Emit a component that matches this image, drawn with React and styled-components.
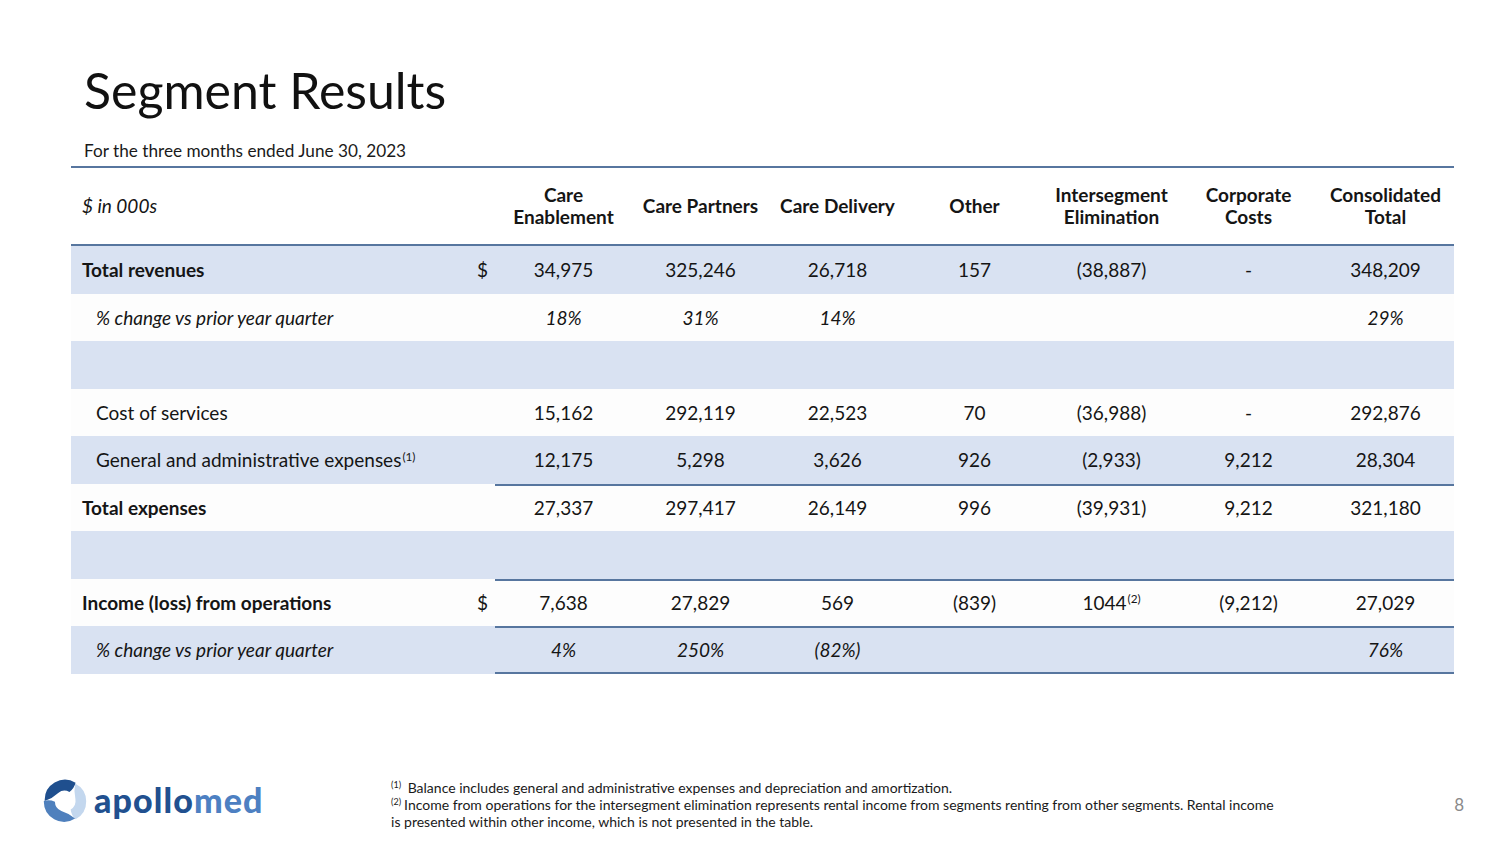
import React from "react";
import styled, { createGlobalStyle } from "styled-components";

const Global = createGlobalStyle`
  html, body { margin: 0; padding: 0; background: #fff; }
  body { font-family: Lato, "Open Sans", sans-serif; color: #151515; }
`;

const Page = styled.div`
  width: 1500px;
  height: 844px;
  box-sizing: border-box;
  display: flex;
  flex-direction: column;
  padding: 60px 36px 0 71px;
`;

const Title = styled.h1`
  margin: 0;
  padding-left: 13px;
  font-size: 50px;
  line-height: 60px;
  font-weight: 400;
  color: #111;
`;

const Subtitle = styled.div`
  padding-left: 13px;
  margin-top: 21px;
  font-size: 17.2px;
  line-height: 20px;
  color: #1a1a1a;
`;

const Table = styled.div`
  margin-top: 5px;
  width: 1383px;
  border-top: 2px solid #57769f;
`;

const cols = "424px repeat(7, 137px)";

const HeaderRow = styled.div`
  display: grid;
  grid-template-columns: ${cols};
  height: 76px;
  align-items: center;
  border-bottom: 2px solid #57769f;
  background: #fff;
`;

const HeadCell = styled.div`
  font-weight: 700;
  font-size: 19px;
  line-height: 22px;
  text-align: ${(p) => (p.$left ? "left" : "center")};
  padding-left: ${(p) => (p.$left ? "11px" : "0")};
  font-style: ${(p) => (p.$italic ? "italic" : "normal")};
  ${(p) => p.$italic && "font-weight: 400;"}
`;

const Row = styled.div`
  display: grid;
  grid-template-columns: ${cols};
  height: 47.5px;
  align-items: stretch;
  background: ${(p) => (p.$shade ? "#d9e2f2" : "#fdfdfd")};
  font-size: 19px;
`;

const LabelCell = styled.div`
  display: flex;
  align-items: center;
  justify-content: space-between;
  padding-left: ${(p) => (p.$indent ? "25px" : "11px")};
  padding-right: 7px;
  font-weight: ${(p) => (p.$bold ? 700 : 400)};
  font-style: ${(p) => (p.$italic ? "italic" : "normal")};
`;

const Dollar = styled.span`
  font-weight: 400;
  font-style: normal;
`;

const ValueCell = styled.div`
  display: flex;
  align-items: center;
  justify-content: center;
  font-style: ${(p) => (p.$italic ? "italic" : "normal")};
  box-shadow: ${(p) =>
    [p.$top && "inset 0 2px 0 #57769f", p.$bottom && "inset 0 -2px 0 #57769f"]
      .filter(Boolean)
      .join(", ") || "none"};
`;

const Sup = styled.sup`
  font-size: 0.62em;
  line-height: 0;
  vertical-align: 0.55em;
  margin-left: 1px;
`;

const Footer = styled.div`
  margin-top: auto;
  margin-left: -29px;
  height: 65px;
  display: flex;
  align-items: flex-start;
`;

const Logo = styled.div`
  display: flex;
  align-items: center;
  gap: 6px;
  width: 348px;
  height: 46px;
  margin-top: -1px;
`;

const LogoText = styled.span`
  font-family: Lato, "Open Sans", sans-serif;
  font-weight: 900;
  font-size: 34px;
  letter-spacing: 1.1px;
  color: #21508f;
  line-height: 1;
  margin-top: -3px;
`;

const LogoMed = styled.span`
  color: #4d80c2;
`;

const Notes = styled.div`
  font-size: 14px;
  line-height: 17px;
  color: #1a1a1a;
  white-space: nowrap;
  width: 1066px;
  margin-left: 2px;
`;

const NoteSup = styled.sup`
  font-size: 9px;
  line-height: 0;
  vertical-align: 0.6em;
  margin-right: 3px;
`;

const PageNum = styled.div`
  font-size: 17px;
  color: #8a8a8a;
  margin-top: 15px;
`;

const headers = [
  ["Care", "Enablement"],
  ["Care Partners"],
  ["Care Delivery"],
  ["Other"],
  ["Intersegment", "Elimination"],
  ["Corporate", "Costs"],
  ["Consolidated", "Total"],
];

const rows = [
  { label: "Total revenues", bold: true, dollar: true, shade: true,
    values: ["34,975", "325,246", "26,718", "157", "(38,887)", "-", "348,209"] },
  { label: "% change vs prior year quarter", italic: true, indent: true,
    values: ["18%", "31%", "14%", "", "", "", "29%"] },
  { label: "", shade: true, values: ["", "", "", "", "", "", ""] },
  { label: "Cost of services", indent: true,
    values: ["15,162", "292,119", "22,523", "70", "(36,988)", "-", "292,876"] },
  { label: "General and administrative expenses", sup: "(1)", indent: true, shade: true,
    values: ["12,175", "5,298", "3,626", "926", "(2,933)", "9,212", "28,304"] },
  { label: "Total expenses", bold: true, top: true,
    values: ["27,337", "297,417", "26,149", "996", "(39,931)", "9,212", "321,180"] },
  { label: "", shade: true, values: ["", "", "", "", "", "", ""] },
  { label: "Income (loss) from operations", bold: true, dollar: true, top: true,
    values: ["7,638", "27,829", "569", "(839)", "1044", "(9,212)", "27,029"], supAt: 4 },
  { label: "% change vs prior year quarter", italic: true, indent: true, shade: true, top: true, bottom: true,
    values: ["4%", "250%", "(82%)", "", "", "", "76%"] },
];

function LogoMark() {
  const p = (a, r) => {
    const t = (a * Math.PI) / 180;
    return `${(50 + r * Math.cos(t)).toFixed(2)} ${(50 + r * Math.sin(t)).toFixed(2)}`;
  };
  const blade = (a0, a1) =>
    `M${p(a0, 44)} A44 44 0 0 1 ${p(a1, 46)} Q${p(a1 + 6, 34)} ${p(a1 - 4, 22)} A22 22 0 0 0 ${p(a0 + 50, 23)} Q${p(a0 + 12, 28)} ${p(a0, 44)} Z`;
  return (
    <svg width="46" height="46" viewBox="0 0 100 100">
      <path d={blade(180, 300)} fill="#1f4f8e" />
      <path d={blade(300, 420)} fill="#c3d7ee" />
      <path d={blade(60, 180)} fill="#4f80bd" />
    </svg>
  );
}

export default function App() {
  return (
    <>
      <Global />
      <Page>
        <Title>Segment Results</Title>
        <Subtitle>For the three months ended June 30, 2023</Subtitle>
        <Table>
          <HeaderRow>
            <HeadCell $left $italic>$ in 000s</HeadCell>
            {headers.map((h, i) => (
              <HeadCell key={i}>
                {h.map((l, j) => (
                  <div key={j}>{l}</div>
                ))}
              </HeadCell>
            ))}
          </HeaderRow>
          {rows.map((r, i) => (
            <Row key={i} $shade={r.shade}>
              <LabelCell $bold={r.bold} $italic={r.italic} $indent={r.indent}>
                <span>
                  {r.label}
                  {r.sup && <Sup>{r.sup}</Sup>}
                </span>
                {r.dollar && <Dollar>$</Dollar>}
              </LabelCell>
              {r.values.map((v, j) => (
                <ValueCell key={j} $italic={r.italic} $top={r.top} $bottom={r.bottom}>
                  <span>
                    {v}
                    {r.supAt === j && <Sup>(2)</Sup>}
                  </span>
                </ValueCell>
              ))}
            </Row>
          ))}
        </Table>
        <Footer>
          <Logo>
            <LogoMark />
            <LogoText>
              apollo<LogoMed>med</LogoMed>
            </LogoText>
          </Logo>
          <Notes>
            <div><NoteSup>(1)</NoteSup> Balance includes general and administrative expenses and depreciation and amortization.</div>
            <div><NoteSup>(2)</NoteSup>Income from operations for the intersegment elimination represents rental income from segments renting from other segments. Rental income</div>
            <div>is presented within other income, which is not presented in the table.</div>
          </Notes>
          <PageNum>8</PageNum>
        </Footer>
      </Page>
    </>
  );
}
